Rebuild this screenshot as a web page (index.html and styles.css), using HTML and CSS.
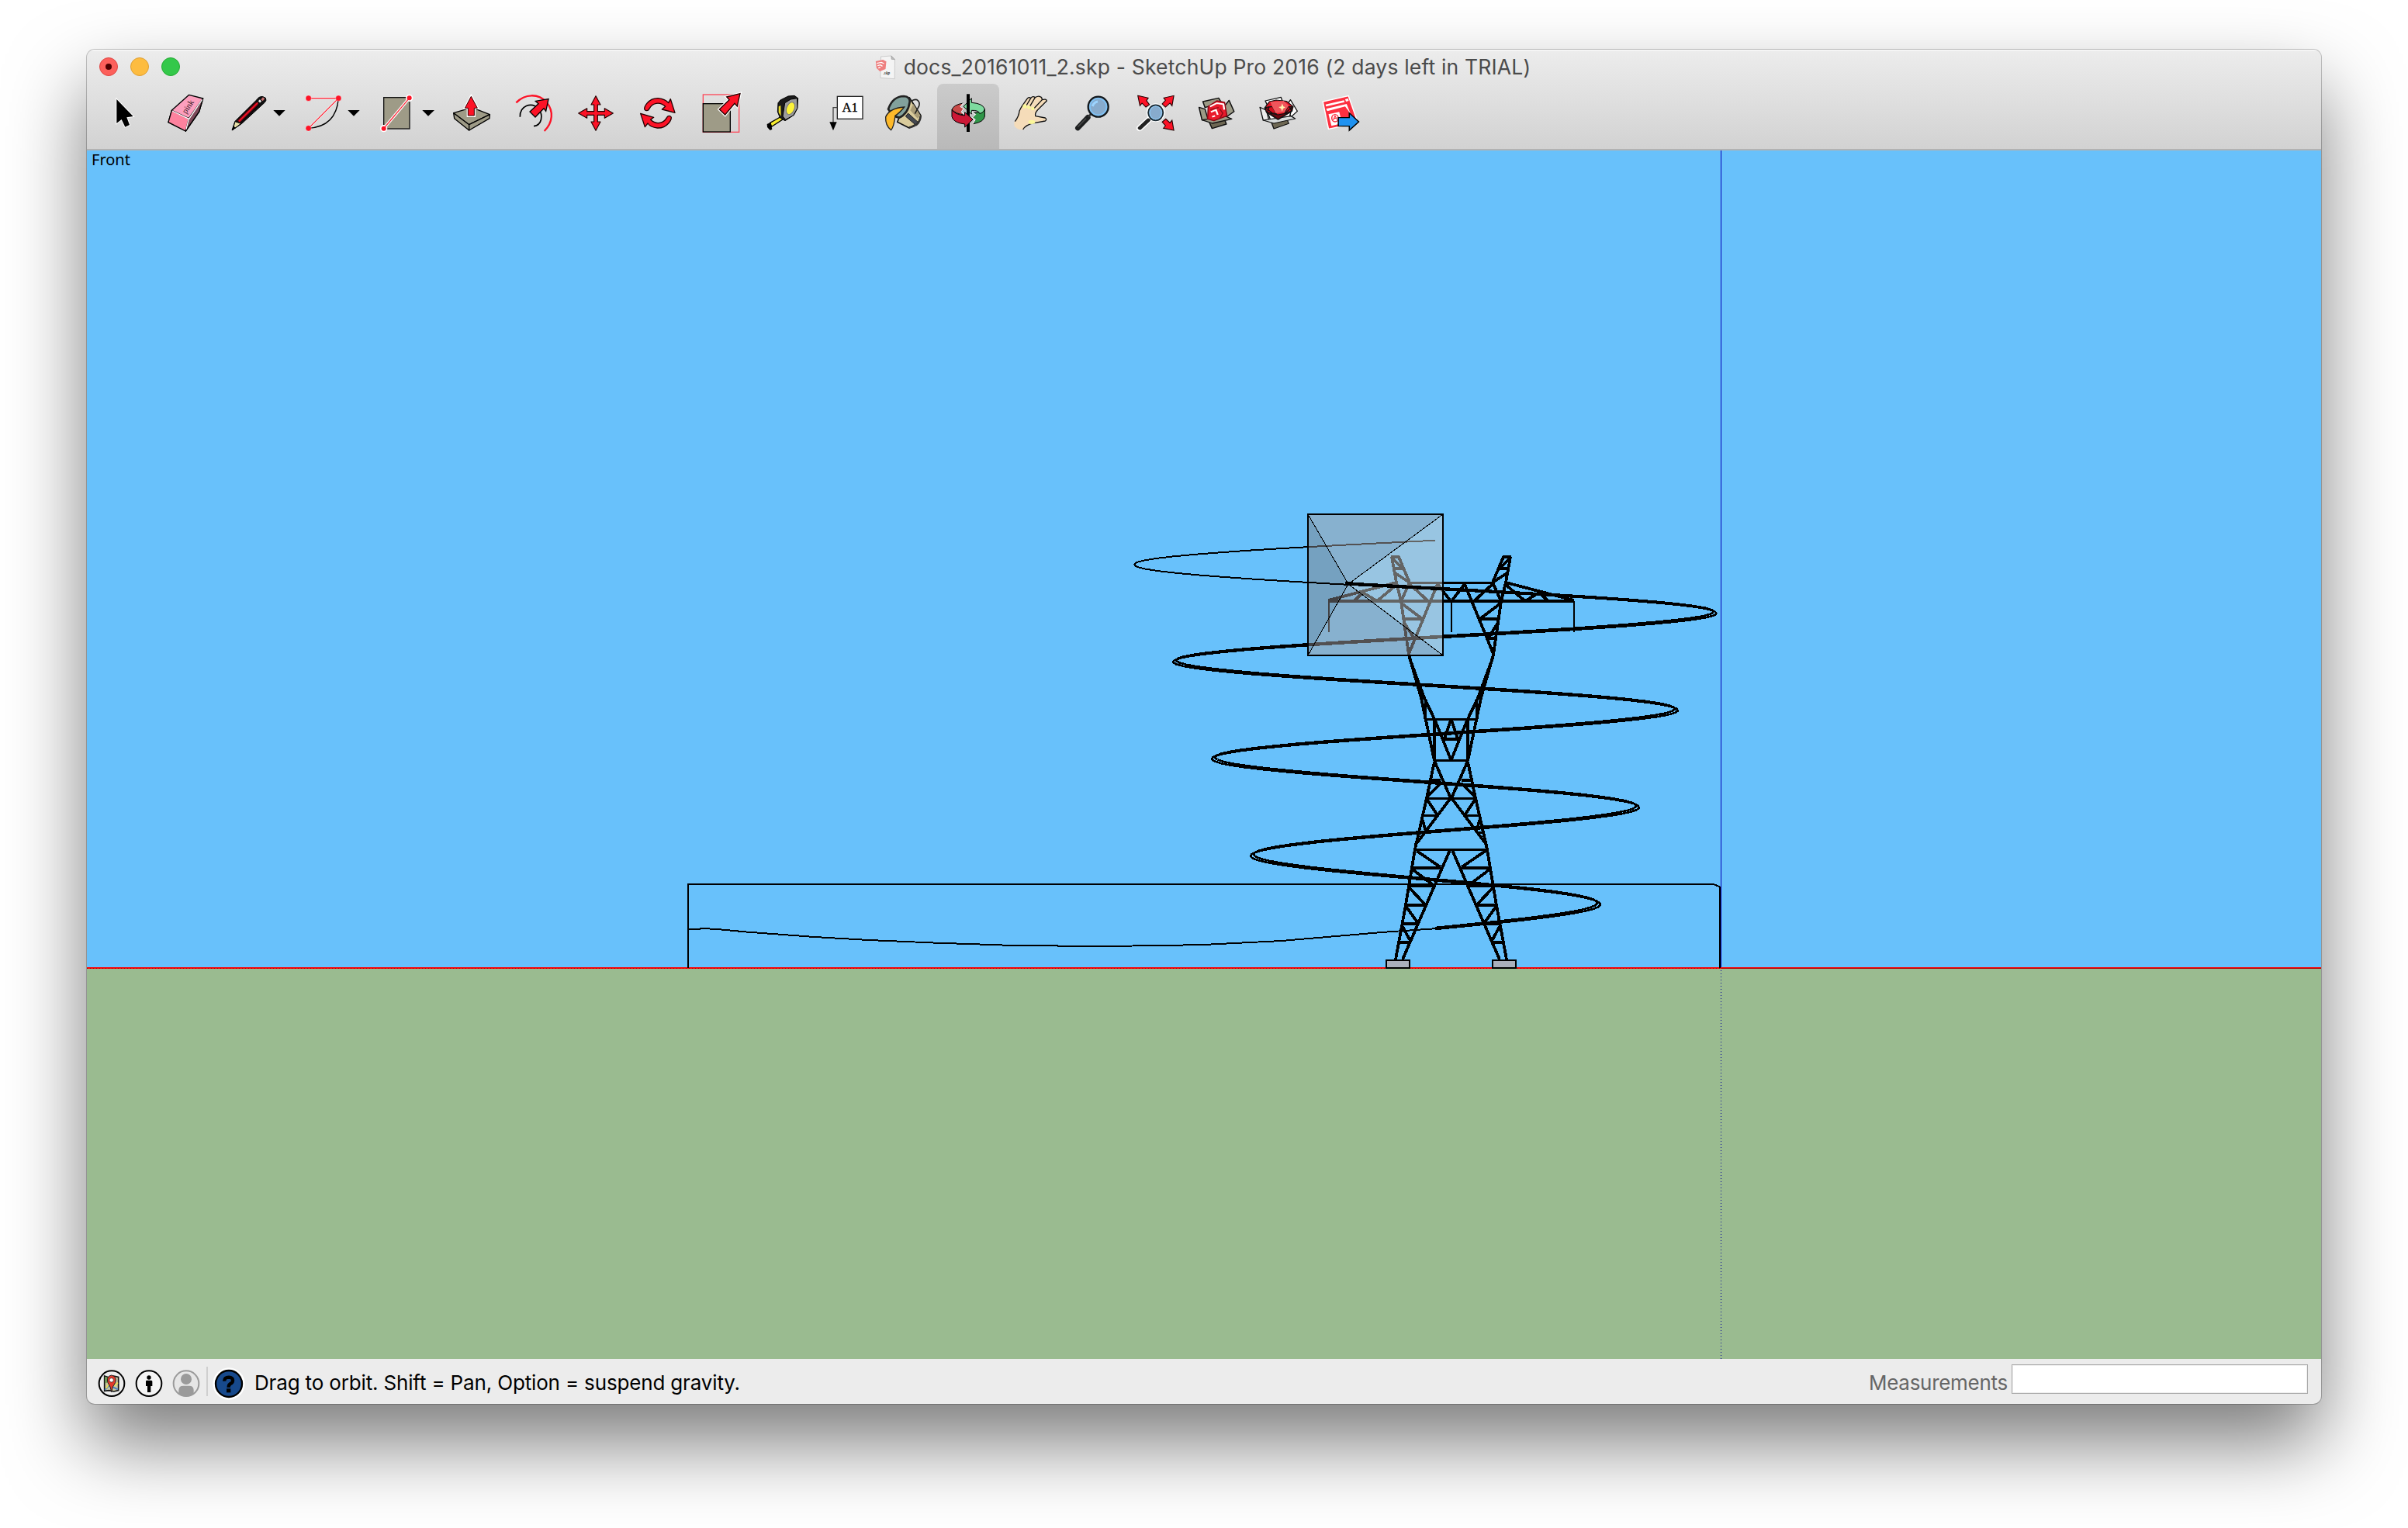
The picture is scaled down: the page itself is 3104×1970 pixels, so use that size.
FILE: index.html
```html
<!DOCTYPE html>
<html lang="en">
<head>
<meta charset="utf-8">
<title>docs_20161011_2.skp - SketchUp Pro 2016</title>
<link rel="stylesheet" href="styles.css">
</head>
<body>
<main class="window">
  <header class="chrome">
    <div class="titlebar">
      <div class="lights">
        <span class="light close"></span><span class="light minimize"></span><span class="light zoom"></span>
      </div>
      <div class="title">
        <svg class="doc-icon" viewBox="500 60 80 96">
          <path d="M522 66 562 63 576 77 575 152 520 148Z" fill="#f4f4f4" stroke="#b9b9b9" stroke-width="2"/>
          <path d="M562 63 563 76 576 77Z" fill="#bbb" stroke="#999" stroke-width="2"/>
          <path d="M502 84 530 78 543 85 540 114 518 123 505 110Z" fill="#ee7f7f"/>
          <path d="M506 92 524 88 534 93M509 101 520 98 528 103M512 110 520 108" stroke="#fff" stroke-width="4" fill="none"/>
          <text class="doc-ext" x="531" y="136">.skp</text>
        </svg>
        <h1 class="title-text">docs_20161011_2.skp - SketchUp Pro 2016 (2 days left in TRIAL)</h1>
      </div>
    </div>
    <nav class="toolbar">
      <button class="tool" aria-label="Select">
        <svg viewBox="60 174 240 252"><path d="M151 234V327L170 312 184 341 201 333 190 304 215 300Z" fill="#000" stroke="#fff" stroke-width="6" paint-order="stroke"/></svg>
      </button>
      <button class="tool" aria-label="Eraser">
        <svg viewBox="300 174 240 252">
          <g stroke="#000" stroke-width="4" stroke-linejoin="round">
            <path d="M431 217 485 231 470 282 418 357 351 323 364 277Z" fill="#fd9fbe"/>
            <path d="M485 231 470 282 418 357 430 308Z" fill="#7d4a59"/>
            <path d="M364 277 430 308 418 357 351 323Z" fill="#fd829e"/>
          </g>
          <path d="M366 279 431 310 482 235M430 310 420 350" stroke="#fff" stroke-width="4" fill="none"/>
          <text class="eraser-word" transform="translate(420 292) rotate(-57)">pink</text>
        </svg>
      </button>
      <button class="tool menu" aria-label="Line">
        <svg viewBox="540 174 288 252">
          <path d="M597 354 609 319 703 226Q714 219 727 229 732 238 724 246L634 329Z" fill="#111" stroke="#000" stroke-width="3"/>
          <path d="M609 320 632 328 600 352Z" fill="#e8e0a8" stroke="#000" stroke-width="3"/>
          <path d="M597 354 602 337 612 345Z" fill="#000"/>
          <path d="M622 320 694 249" stroke="#6a0a14" stroke-width="15"/><path d="M624 319 697 247" stroke="#fb1226" stroke-width="5"/>
          <path d="M618 314 692 242M630 325 703 254" stroke="#000" stroke-width="3"/>
          <path d="M698 243 709 232" stroke="#111" stroke-width="20"/><path d="M702 244 708 238" stroke="#eee" stroke-width="9"/>
          <path d="M713 230 720 236" stroke="#c97070" stroke-width="12"/>
          <path d="M757 276H803L780 299Z"/>
        </svg>
      </button>
      <button class="tool menu" aria-label="Arc">
        <svg viewBox="828 174 288 252">
          <path d="M893 230H1009L893 346" fill="none" stroke="#fff" stroke-opacity=".7" stroke-width="8"/>
          <path d="M893 346Q1000 340 1009 230" fill="none" stroke="#000" stroke-width="4"/>
          <path d="M893 230H1009L893 346" fill="none" stroke="#fd1226" stroke-width="3.5"/>
          <g fill="#fd1226" stroke="#fff" stroke-opacity=".5" stroke-width="2"><circle cx="893" cy="230" r="11"/><circle cx="1009" cy="230" r="11"/><circle cx="893" cy="346" r="11"/></g>
          <path d="M1045 276H1091L1068 299Z"/>
        </svg>
      </button>
      <button class="tool menu" aria-label="Rectangle">
        <svg viewBox="1116 174 288 252">
          <rect x="1184" y="227" width="100" height="121" fill="#9e9b87" stroke="#111" stroke-width="4"/>
          <path d="M1184 347 1283 229" stroke="#fff" stroke-width="11"/><circle cx="1184" cy="347" r="14" fill="#fff"/><circle cx="1283" cy="229" r="14" fill="#fff"/>
          <path d="M1184 347 1283 229" stroke="#fd2a3a" stroke-width="4"/><circle cx="1184" cy="347" r="9" fill="#fd1226"/><circle cx="1283" cy="229" r="9" fill="#fd1226"/>
          <path d="M1333 276H1380L1356 299Z"/>
        </svg>
      </button>
      <button class="tool" aria-label="Push/Pull">
        <svg viewBox="24 24 240 252">
          <g stroke="#000" stroke-width="4" stroke-linejoin="round" fill="#9e9b87"><path d="M74 137 145 116 214 143 134 182Z"/><path d="M74 137 134 182V204L77 158Z"/><path d="M214 143 134 182V204L213 158Z"/></g>
          <path d="M142 73 166 118H154V148H130V118H118Z" fill="#fd1226" stroke="#fff" stroke-width="10"/>
          <path d="M142 73 166 118H154V147H130V118H118Z" fill="#fd1226" stroke="#300" stroke-width="3"/>
        </svg>
      </button>
      <button class="tool" aria-label="Offset">
        <svg viewBox="264 24 240 252">
          <path d="M331 152C330 110 374 92 402 120 422 145 416 184 384 188" fill="none" stroke="#000" stroke-width="5"/>
          <path d="M316 97C350 62 402 60 434 96 462 130 458 174 425 207" fill="none" stroke="#fd1226" stroke-width="7"/>
          <path d="M441 83 431 130 423 119 390 153 369 132 402 101 391 91Z" fill="#fd1226" stroke="#000" stroke-width="4"/>
        </svg>
      </button>
      <button class="tool" aria-label="Move">
        <svg viewBox="504 24 240 252">
          <path d="M624 71 642 105H631V131H658V119L691 138 658 157V145H631V171H642L624 205 606 171H617V145H590V157L557 138 590 119V131H617V105H606Z" fill="#fd1226" stroke="#200" stroke-width="3.5" stroke-linejoin="round"/>
        </svg>
      </button>
      <button class="tool" aria-label="Rotate">
        <svg viewBox="744 24 240 252">
          <g fill="#fd1226" stroke="#200" stroke-width="4" stroke-linejoin="round">
            <path d="M813 124C807 117 827 78 866 80 884 82 897 89 905 98L913 83 930 136 880 123 893 112C870 91 842 98 830 122 826 130 817 129 813 124Z"/>
            <path d="M915 152C921 159 901 197 862 195 844 193 831 186 825 177L814 191 797 139 848 154 836 163C857 184 886 178 899 154 903 146 911 147 915 152Z"/>
          </g>
        </svg>
      </button>
      <button class="tool" aria-label="Scale">
        <svg viewBox="984 24 240 252">
          <rect x="1039" y="66" width="139" height="145" fill="none" stroke="#fd4a5a" stroke-width="4"/>
          <rect x="1039" y="101" width="105" height="109" fill="#9e9b87" stroke="#000" stroke-width="4"/>
          <path d="M1182 62 1171 111 1161 100 1124 144 1102 123 1140 86 1130 75Z" fill="#fd1226" stroke="#fff" stroke-width="11"/>
          <path d="M1182 62 1171 111 1161 100 1124 144 1102 123 1140 86 1130 75Z" fill="#fd1226" stroke="#200" stroke-width="4"/>
        </svg>
      </button>
      <button class="tool" aria-label="Tape Measure">
        <svg viewBox="24 174 240 252">
          <path d="M98 325 142 300 150 310 104 340Z" fill="#f6ec2e" stroke="#000" stroke-width="4"/>
          <path d="M86 330 100 323 106 350 98 354 87 342Z"/>
          <path d="M138 237 168 222 192 220 206 230 203 270 190 295 156 317 136 305 127 282 129 248Z" fill="#1b1b1b" stroke="#000" stroke-width="3"/>
          <path d="M131 262 139 258 140 300 131 285Z" fill="#e9dc28"/>
          <path d="M155 248 178 234 203 230 204 268 188 296 158 313 147 300Z" fill="#9c9c9c" stroke="#000" stroke-width="3"/>
          <ellipse cx="177" cy="269" rx="15" ry="25" transform="rotate(22 177 269)" fill="#fdf33a" stroke="#777" stroke-width="3"/>
        </svg>
      </button>
      <button class="tool" aria-label="Text">
        <svg viewBox="264 174 240 252">
          <rect x="358" y="223" width="98" height="87" fill="#fff" stroke="#222" stroke-width="4"/>
          <path d="M358 266H342V325" fill="none" stroke="#444" stroke-width="4"/><path d="M328 322H356L342 355Z"/>
          <text class="label-glyph" x="407" y="282">A1</text>
        </svg>
      </button>
      <button class="tool" aria-label="Paint Bucket">
        <svg viewBox="504 174 240 252">
          <path d="M637 228 681 297 672 325 636 345 590 322 615 262Z" fill="#d9cb9c" stroke="#111" stroke-width="5" stroke-linejoin="round"/>
          <path d="M652 252 680 298 668 308 640 277Z" fill="#a89b77"/>
          <path d="M622 300 632 288 674 326 664 336Z" fill="#444850" stroke="#222" stroke-width="3"/>
          <path d="M680 300Q677 335 636 343" fill="none" stroke="#333" stroke-width="8"/>
          <path d="M645 242Q652 233 666 236 679 245 674 260L658 290" fill="none" stroke="#222" stroke-width="5"/>
          <path d="M555 272Q572 223 615 222 640 224 638 244 632 290 597 305 570 300 555 272Z" fill="#82a19c" stroke="#222" stroke-width="8"/>
          <path d="M545 302Q560 268 617 264 598 288 582 297 577 340 566 353 543 335 545 302Z" fill="#fdb92a" stroke="#222" stroke-width="4"/>
        </svg>
      </button>
      <button class="tool active" aria-label="Orbit">
        <svg viewBox="744 174 240 252">
          <path d="M801 274Q808 255 845 249L836 263 848 270 838 284 848 294Q815 290 801 274Z" fill="#c94a48" stroke="#000" stroke-width="3"/>
          <path d="M928 270V300Q925 322 884 329L892 313 880 303 893 290 882 286Q920 285 928 270Z" fill="#2f9648" stroke="#000" stroke-width="3"/>
          <path d="M846 262 877 230V247Q921 250 928 272 922 288 908 289 905 276 877 277V291Z" fill="#7ddb9f" stroke="#000" stroke-width="3"/>
          <path d="M845 249 835 263 847 270 838 283 850 294" fill="none" stroke="#eee" stroke-width="4"/>
          <path d="M864 214V360" stroke="#000" stroke-width="12"/>
          <path d="M801 274Q812 293 850 297L851 284 882 312 851 342V330Q806 325 801 301Z" fill="#cc1836" stroke="#000" stroke-width="3"/>
          <path d="M878 283 892 292 880 304 891 313 882 328" fill="none" stroke="#eee" stroke-width="4"/>
        </svg>
      </button>
      <button class="tool" aria-label="Pan">
        <svg viewBox="984 174 240 252">
          <path d="M1042 322Q1060 300 1062 280C1068 262 1080 250 1092 232Q1100 223 1106 230 1114 219 1123 227 1136 220 1142 224 1150 226 1150 236 1166 231 1168 240L1140 268Q1120 286 1124 299L1162 306Q1170 312 1162 318L1118 326Q1088 335 1078 351 1052 354 1042 335Z" fill="#f5dcb9"/>
          <path d="M1045 320Q1060 300 1062 280C1068 262 1080 250 1092 232Q1100 223 1106 230 1114 219 1123 227 1136 220 1142 224 1150 226 1150 236 1166 231 1168 240L1140 268Q1120 286 1124 299L1162 306Q1170 312 1162 318L1118 326Q1086 333 1076 351M1106 230 1089 258M1123 227 1102 262M1150 236 1118 270" fill="none" stroke="#111" stroke-width="4" stroke-linejoin="round"/>
          <g fill="#fbf79b"><circle cx="1083" cy="261" r="8"/><circle cx="1099" cy="265" r="7"/><circle cx="1114" cy="270" r="7"/><ellipse cx="1110" cy="322" rx="13" ry="8"/></g>
        </svg>
      </button>
      <button class="tool" aria-label="Zoom">
        <svg viewBox="1224 174 240 252">
          <path d="M1288 345 1327 304" stroke="#1d1f20" stroke-width="20" stroke-linecap="round"/><path d="M1288 341 1320 308" stroke="#444" stroke-width="5"/>
          <path d="M1328 302 1340 290" stroke="#333" stroke-width="8"/>
          <circle cx="1367" cy="263" r="39" fill="#87abcd" stroke="#12181c" stroke-width="7"/>
          <circle cx="1367" cy="263" r="32" fill="none" stroke="#7fc2f5" stroke-width="5"/>
          <path d="M1345 261Q1350 245 1365 243" fill="none" stroke="#9cd4ff" stroke-width="9"/>
        </svg>
      </button>
      <button class="tool" aria-label="Zoom Extents">
        <svg viewBox="125 174 209 252" preserveAspectRatio="none">
          <g fill="#fd1226" stroke="#200" stroke-width="3"><path d="M174 220 209 229 203 239 213 255 201 264 188 249 181 259Z"/><path d="M295 220 289 259 282 249 267 264 256 252 267 238 261 229Z"/><path d="M295 354 260 346 267 336 256 322 268 310 282 325 289 315Z"/></g>
          <path d="M180 346 209 315" stroke="#fff" stroke-width="22" stroke-linecap="round"/><ellipse cx="234" cy="286" rx="31" ry="36" fill="#fff"/>
          <path d="M181 345 209 315" stroke="#222" stroke-width="14" stroke-linecap="round"/>
          <ellipse cx="234" cy="286" rx="25" ry="30" fill="#87abcd" stroke="#1a2a33" stroke-width="5"/>
          <ellipse cx="234" cy="286" rx="20" ry="25" fill="none" stroke="#8fcaf5" stroke-width="3"/>
        </svg>
      </button>
      <button class="tool" aria-label="3D Warehouse">
        <svg viewBox="334 174 209 252" preserveAspectRatio="none">
          <g stroke="#111" stroke-width="4" stroke-linejoin="round" fill="#9c9a86">
            <path d="M393 243 446 229 455 246 400 266Z"/><path d="M380 265 400 272 412 318 390 314Z"/><path d="M465 262 481 238 498 281 474 301Z"/>
            <path d="M414 322 424 347 472 330 466 312Z" fill="#6e6854"/>
            <path d="M390 314 470 300 490 310 425 327Z"/>
            <path d="M411 262 440 240 466 246 474 298 430 317 409 310Z" fill="#ea1a2c" stroke="#8a0a14"/>
          </g>
          <path d="M417 262 440 249 462 253 465 274M420 283 437 275 443 294M424 302 434 298" fill="none" stroke="#fff" stroke-width="6"/>
          <path d="M450 272 460 288 450 308M446 266 418 274" fill="none" stroke="#8f0c18" stroke-width="4"/>
        </svg>
      </button>
      <button class="tool" aria-label="Extension Warehouse">
        <svg viewBox="543 174 209 252" preserveAspectRatio="none">
          <g stroke="#111" stroke-width="3.5" stroke-linejoin="round">
            <path d="M603 240 656 226 662 246 612 262Z" fill="#fff"/><path d="M585 265 607 277 616 318 596 315Z" fill="#ececec"/><path d="M672 262 688 236 711 280 690 302Z" fill="#fff"/>
            <path d="M622 318 632 348 682 328 676 310Z" fill="#6e6854"/><path d="M608 275 690 280 684 304 622 318Z" fill="#fff"/>
            <path d="M596 315 690 299 704 309 632 327Z" fill="#d8dcdc"/>
            <path d="M601 267 617 243 640 237 675 242 697 262 693 280 646 313 608 285Z" fill="#e01222"/>
            <path d="M616 286 646 294 684 286 646 311Z" fill="#6e0710"/>
            <path d="M603 266 627 262 640 290 607 284ZM692 262 678 264 668 290 690 280Z" fill="#d40c1c"/>
            <path d="M620 244 665 240 682 258 668 284 638 288 626 262Z" fill="#f0555b" stroke="none"/>
            <path d="M616 262 610 284M684 262 692 280M603 266 626 286M694 262 672 286" fill="none"/>
          </g>
          <path d="M648 264 657 262 660 250 664 262 671 265 663 270 660 281 656 270Z" fill="#fff3b0"/>
        </svg>
      </button>
      <button class="tool" aria-label="Send to LayOut">
        <svg viewBox="752 174 209 252" preserveAspectRatio="none">
          <path d="M797 243 883 221 915 325 816 349Z" fill="#fd3040" stroke="#fff" stroke-width="4"/>
          <path d="M806 254 868 238 870 245 808 262ZM872 234 882 231 884 240 875 243ZM808 271 877 252 897 310 890 320 884 280 872 262 812 280Z" fill="#fff"/>
          <path d="M816 292 852 283 862 327 826 337Z" fill="#fff"/>
          <ellipse cx="838" cy="307" rx="11" ry="14" fill="none" stroke="#fd3040" stroke-width="4"/><path d="M832 315 838 298 844 312M833 309 843 306" stroke="#fd3040" stroke-width="3" fill="none"/>
          <path d="M849 305H886V287L918 321 886 354V338H849Z" fill="#1f92f0" stroke="#000" stroke-width="4"/>
        </svg>
      </button>
    </nav>
  </header>

  <section class="viewport">
    <svg class="scene" viewBox="112 194 2880 1558">
      <rect class="ground" x="112" y="1249" width="2880" height="503"/>
      <g class="drawing" shape-rendering="crispEdges">
        <path class="red-axis" d="M112 1248H2992"/>
        <path class="red-shade" d="M2219 1248.5H2992"/>
        <path class="red-dots" d="M112 1248.5H2218"/>
        <path class="blue-dots" d="M2218.5 1251V1752"/>

        <path class="edge" d="M887 1248V1140H2209L2217 1143.500V1248"/>
        <path class="edge" d="M887 1198H901L904 1197 925 1198 962 1201.500 1050 1208 1120 1212 1203 1215.500 1307 1219 1420 1220 1500 1219 1551 1218 1652 1213 1781 1202 1853 1197"/>
        <path class="edge" id="coil-start"/>
        <path class="edge coil" id="coil-outer"/>
        <path class="edge coil" id="coil-inner"/>

        <defs>
          <g id="pylon-half">
            <path d="M1793 718H1803L1817 751M1794 718 1800 751 1806 775 1810 803 1816 844M1796 733H1808M1795 720 1807 732M1797 738 1817 751"/>
            <path d="M1817 751.500H1871M1712 774 1800 751M1745 775 1757 764 1775 775 1800 754M1817 751 1806 775M1817 753 1841 775M1816 843 1853 753 1870 775"/>
            <path d="M1807 778 1832 797M1808 798H1833M1810 803 1823 823M1814 823H1823"/>
            <path d="M1816 844 1832 900 1849 981M1816 846 1836 900 1850 929 1870 979M1849 927V981M1830 900H1838M1838 902 1837 927M1836 927.500H1871M1870 929 1862 952M1861 953H1871M1849 980.500H1871"/>
            <path d="M1849 981 1870 1029 1824 1090M1849 982 1839 1029 1824 1095 1812 1167 1799 1237M1844 1006H1857M1857 1010 1839 1028M1839 1029.500H1871M1839 1030 1853 1051M1833 1051.500H1853M1833 1055 1838 1072M1829 1073.500H1838"/>
            <path d="M1824 1095.500H1871M1869 1096 1808 1237M1826 1097 1857 1118M1820 1119H1857M1821 1121 1846 1140M1815 1142.500H1848M1816 1144 1837 1166M1812 1167H1838M1812 1168 1827 1189M1807 1191H1828M1807 1193 1818 1213M1804 1215H1817"/>
            <path class="arm" d="M1712 775H1871"/>
            <path class="rod" d="M1712.500 775V815M1870.500 775V815"/>
            <rect class="footing" x="1787" y="1238" width="30" height="10"/>
          </g>
        </defs>
        <use class="pylon" href="#pylon-half"/>
        <use class="pylon" href="#pylon-half" transform="translate(3741 0) scale(-1 1)"/>

        <path d="M1686 663H1860L1738 753Z" fill="#a5a2a4" fill-opacity=".5"/>
        <path d="M1686 845H1860L1738 753Z" fill="#a5a2a4" fill-opacity=".5"/>
        <path d="M1686 663V845L1738 753Z" fill="#828286" fill-opacity=".5"/>
        <path d="M1860 663V845L1738 753Z" fill="#c8caca" fill-opacity=".5"/>
        <path class="hair" d="M1686 663 1738 753 1686 845M1860 663 1738 753 1860 845"/>
        <rect class="edge" x="1686" y="663" width="174" height="182"/>
        <rect x="1734" y="750" width="10" height="4"/>
        <path class="edge" id="coil-front"/>
        <path class="edge coil" id="coil-front-inner"/>
        <path class="blue-axis" d="M2218.500 194V1247"/>
      </g>
    </svg>
    <span class="view-name">Front</span>
  </section>

  <footer class="status">
    <svg class="badge" viewBox="60 60 144 144">
      <circle cx="132" cy="131" r="49" fill="#ededed" stroke="#000" stroke-width="6"/>
      <path d="M104 102 122 108 140 102 158 106V158L140 162 122 158 104 160Z" fill="#c9c6a0" stroke="#111" stroke-width="5"/>
      <path d="M106 104 120 109V124L106 132Z" fill="#6c9a52"/><path d="M106 156 122 138 156 154" stroke="#4c7fc0" stroke-width="6" fill="none"/><path d="M110 150 122 132M142 140 156 128" stroke="#efe04e" stroke-width="5"/>
      <path d="M131 164Q128 142 117 128 110 103 131 99 153 103 146 128 134 142 131 164Z" fill="#e2382a" stroke="#222" stroke-width="3"/><circle cx="131" cy="118" r="8" fill="#fff" stroke="#222" stroke-width="2"/>
    </svg>
    <svg class="badge" viewBox="204 60 144 144">
      <circle cx="276" cy="131" r="49" fill="#f5f5f5" stroke="#000" stroke-width="6"/>
      <circle cx="276" cy="108" r="8"/><path d="M266 119H286L289 122V141H283V165H270V141H264V122Z"/>
    </svg>
    <svg class="badge" viewBox="348 60 144 144">
      <circle cx="420" cy="131" r="49" fill="#e6e6e6" stroke="#9a9a9a" stroke-width="6"/>
      <circle cx="420" cy="114" r="21" fill="#9a9a9a"/><path d="M391 172V156Q392 140 408 140H432Q448 140 449 156V172Q420 190 391 172Z" fill="#9a9a9a"/>
    </svg>
    <span class="divider"></span>
    <svg class="badge" viewBox="513 60 144 144">
      <circle cx="585" cy="132" r="62" fill="#fff"/><circle cx="585" cy="132" r="51" fill="#17498c" stroke="#000" stroke-width="7"/>
      <path d="M568 122Q567 107 585 107 601 108 600 120 600 128 591 132 584 136 584 146" fill="none" stroke="#000" stroke-width="13"/><rect x="576" y="151" width="16" height="15"/>
    </svg>
    <p class="hint">Drag to orbit. Shift = Pan, Option = suspend gravity.</p>
    <label class="measure" for="vcb">Measurements</label>
    <input class="vcb" id="vcb" type="text">
  </footer>
</main>
<script src="scene.js"></script>
</body>
</html>
```
FILE: styles.css
```css
* { box-sizing: border-box; }

body {
  margin: 0;
  padding: 64px 112px 160px;
  background: #fff;
  font-family: Inter, "Liberation Sans", sans-serif;
}

.window {
  display: flex;
  flex-direction: column;
  height: 1746px;
  border-radius: 10px;
  overflow: hidden;
  background: #ececec;
  box-shadow: 0 0 0 1px rgba(0, 0, 0, .22), 0 50px 100px rgba(0, 0, 0, .52);
}

.chrome {
  display: flex;
  flex-direction: column;
  height: 130px;
  background: linear-gradient(#ececec, #d2d2d2);
  border-top: 2px solid #f5f5f5;
  border-bottom: 2px solid #b2b2b2;
}

.titlebar {
  display: grid;
  grid-template-columns: 1fr auto 1fr;
  align-items: center;
  height: 42px;
}

.lights { display: flex; gap: 16px; padding-left: 16px; margin-top: -2px; }

.light {
  display: grid;
  place-items: center;
  width: 24px;
  height: 24px;
  border-radius: 50%;
  border: 1px solid;
}
.close { background: #fc605b; border-color: #df4744; }
.close::after { content: ""; width: 8px; height: 8px; border-radius: 50%; background: #4d0000; }
.minimize { background: #fdbc40; border-color: #de9f34; }
.zoom { background: #34c84a; border-color: #27aa35; }

.title { display: flex; align-items: center; gap: 10px; margin-right: 3px; }
.doc-icon { width: 27px; height: 32px; }
.doc-ext { font: italic bold 16px "Liberation Serif", serif; fill: #333; }
.title-text {
  margin: -1px 0 0;
  font-size: 26.5px;
  font-weight: 400;
  line-height: 41px;
  letter-spacing: .18px;
  color: #4b4b4b;
  white-space: nowrap;
}

.toolbar { display: flex; padding-left: 8px; height: 84px; }
.tool { width: 80px; height: 84px; padding: 0; border: 0; background: none; }
.tool svg { display: block; width: 100%; height: 84px; }
.menu { width: 96px; }
.active { background: linear-gradient(#cbcbcb, #b9b9b9); border-radius: 8px 8px 0 0; }
.eraser-word { font: 32px "Liberation Serif", serif; fill: #2c1018; }
.label-glyph { font: 50px "Liberation Serif", serif; text-anchor: middle; stroke: #000; stroke-width: 1; }

.viewport { position: relative; height: 1558px; background: #68c1fb; }
.scene { display: block; width: 2880px; height: 1558px; }
.view-name {
  position: absolute;
  left: 6px;
  top: -1px;
  font: 20px/26px "Noto Sans", sans-serif;
  color: #000;
}

.ground { fill: #9abb90; }
.drawing path, .drawing .edge { stroke-linejoin: round; }
.edge { fill: none; stroke: #000; stroke-width: 2; }
.coil { stroke-width: 2.6; }
.hair { fill: none; stroke: #000; stroke-width: 1; }
.red-axis { stroke: #f00; stroke-width: 2; }
.red-shade { stroke: #b40000; stroke-width: 1; }
.red-dots { stroke: #900; stroke-width: 1; stroke-dasharray: 1 3; }
.blue-axis { stroke: #0000b4; stroke-width: 1; }
.blue-dots { stroke: #000096; stroke-width: 1; stroke-dasharray: 1 3; }
.pylon { fill: none; stroke: #000; stroke-width: 3.8; }
.arm { stroke-width: 4; }
.rod { stroke-width: 2; }
.footing { fill: #aab0bb; stroke-width: 2; }

.status {
  display: flex;
  align-items: center;
  height: 58px;
  padding: 0 17px 0 8px;
  font-size: 26px;
}
.badge { width: 48px; height: 48px; margin-top: 6px; flex: none; }
.divider { width: 2px; height: 38px; margin: 0 3px 0 2px; background: #cfcfcf; }
.hint { margin: 3px auto 0 9px; letter-spacing: -.16px; white-space: nowrap; }
.measure { margin: 3px 5px 0 0; color: #666; letter-spacing: -.28px; }
.vcb { width: 382px; height: 38px; margin-bottom: 6px; padding: 0 6px; border: 1px solid #a9a9a9; background: #fff; font: inherit; box-shadow: inset 0 0 0 1px #eee; }
```
FILE: scene.js
```js
// Side view of the conical coil: turns is measured in half turns from the
// first leftmost point; the radius shrinks as the coil descends.
const AXIS_X = 1850;
const TOP_Y = 728;
const PITCH = 62.6;

function coil(from, to, inset, drop) {
  const steps = Math.round((to - from) * 24);
  const points = [];
  for (let i = 0; i <= steps; i++) {
    const turns = from + (to - from) * i / steps;
    const radius = 388 - 25 * turns - inset;
    const x = AXIS_X - radius * Math.cos(Math.PI * turns);
    const y = TOP_Y + PITCH * turns + drop;
    points.push(x.toFixed(1) + " " + y.toFixed(1));
  }
  return "M" + points.join("L");
}

const paths = {
  "coil-start": coil(-0.5, 0, 0, 0),
  "coil-outer": coil(1, 7.5, 0, 0.5),
  "coil-inner": coil(1, 7.5, 4, -1.5),
  "coil-front": coil(0, 1, 0, 0.5),
  "coil-front-inner": coil(0.4, 1, 4, -1.5)
};
for (const id in paths) {
  document.getElementById(id).setAttribute("d", paths[id]);
}
```
